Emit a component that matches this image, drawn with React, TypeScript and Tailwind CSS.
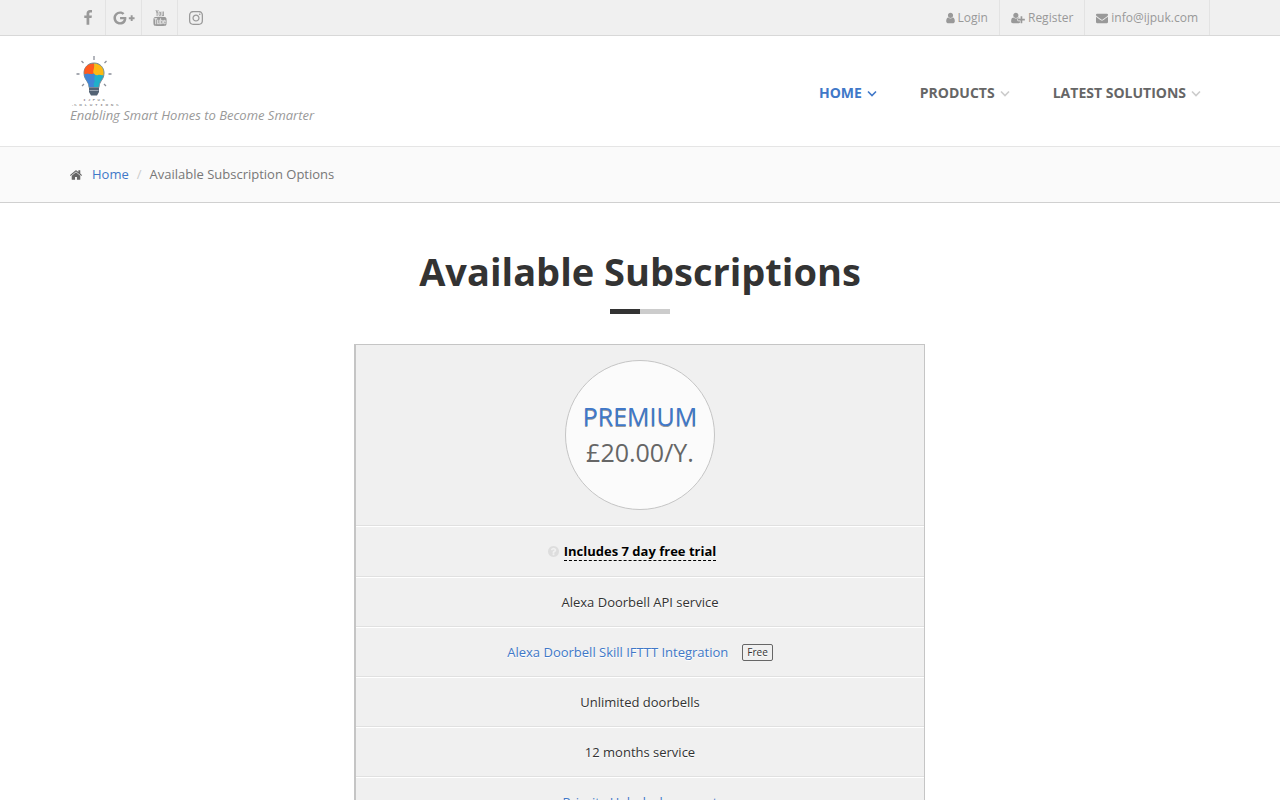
import React from 'react'
import { FaGooglePlusG, FaInstagram } from 'react-icons/fa'

const paths = {
  facebook: "M1343 12v264h-157q-86 0-116 36t-30 108v189h293l-39 296h-254v759h-306v-759h-255v-296h255v-218q0-186 104-288.5t277-102.5q147 0 228 12z",
  youtube: "M1099 1244v211q0 67-39 67-23 0-45-22v-301q22-22 45-22 39 0 39 67zm338 1v46h-90v-46q0-68 45-68t45 68zm-966-218h107v-94h-312v94h105v569h100v-569zm288 569h89v-494h-89v378q-30 42-57 42-18 0-21-21-1-3-1-35v-364h-89v391q0 49 8 73 12 37 58 37 48 0 102-61v54zm429-148v-197q0-73-9-99-17-56-71-56-50 0-93 54v-217h-89v663h89v-48q45 55 93 55 54 0 71-55 9-27 9-100zm338-10v-13h-91q0 51-2 61-7 36-40 36-46 0-46-69v-87h179v-103q0-79-27-116-39-51-106-51-68 0-107 51-28 37-28 116v173q0 79 29 116 39 51 108 51 72 0 108-53 18-27 21-54 2-9 2-58zm-608-913v-210q0-69-43-69t-43 69v210q0 70 43 70t43-70zm719 751q0 234-26 350-14 59-58 99t-102 46q-184 21-555 21t-555-21q-58-6-102.5-46t-57.5-99q-26-112-26-350 0-234 26-350 14-59 58-99t103-47q183-20 554-20t555 20q58 7 102.5 47t57.5 99q26 112 26 350zm-998-1276h102l-121 399v271h-100v-271q-14-74-61-212-37-103-65-187h106l71 263zm370 333v175q0 81-28 118-38 51-106 51-67 0-105-51-28-38-28-118v-175q0-80 28-117 38-51 105-51 68 0 106 51 28 37 28 117zm335-162v499h-91v-55q-53 62-103 62-46 0-59-37-8-24-8-75v-394h91v367q0 33 1 35 3 22 21 22 27 0 57-43v-381h91z",
  user: "M1536 1399q0 109-62.5 187t-150.5 78h-854q-88 0-150.5-78t-62.5-187q0-85 8.5-160.5t31.5-152 58.5-131 94-89 134.5-34.5q131 128 313 128t313-128q76 0 134.5 34.5t94 89 58.5 131 31.5 152 8.5 160.5zm-256-887q0 159-112.5 271.5t-271.5 112.5-271.5-112.5-112.5-271.5 112.5-271.5 271.5-112.5 271.5 112.5 112.5 271.5z",
  userPlus: "M704 896q-159 0-271.5-112.5t-112.5-271.5 112.5-271.5 271.5-112.5 271.5 112.5 112.5 271.5-112.5 271.5-271.5 112.5zm960 128h352q13 0 22.5 9.5t9.5 22.5v192q0 13-9.5 22.5t-22.5 9.5h-352v352q0 13-9.5 22.5t-22.5 9.5h-192q-13 0-22.5-9.5t-9.5-22.5v-352h-352q-13 0-22.5-9.5t-9.5-22.5v-192q0-13 9.5-22.5t22.5-9.5h352v-352q0-13 9.5-22.5t22.5-9.5h192q13 0 22.5 9.5t9.5 22.5v352zm-736 224q0 52 38 90t90 38h256v238q-68 50-171 50h-874q-121 0-194-69t-73-190q0-53 3.5-103.5t14-109 26.5-108.5 43-97.5 62-81 85.5-53.5 111.5-20q19 0 39 17 79 61 154.5 91.5t164.5 30.5 164.5-30.5 154.5-91.5q20-17 39-17 132 0 217 96h-223q-52 0-90 38t-38 90v192z",
  envelope: "M1792 710v794q0 66-47 113t-113 47h-1472q-66 0-113-47t-47-113v-794q44 49 101 87 362 246 497 345 57 42 92.5 65.5t94.5 48 110 24.5h2q51 0 110-24.5t94.5-48 92.5-65.5q170-123 498-345 57-39 100-87zm0-294q0 79-49 151t-122 123q-376 261-468 325-10 7-42.5 31t-54 38.5-52 32.5-57.5 27-50 9h-2q-23 0-50-9t-57.5-27-52-32.5-54-38.5-42.5-31q-91-64-262-182.5t-205-142.5q-62-42-117-115.5t-55-136.5q0-78 41.5-130t118.5-52h1472q65 0 112.5 47t47.5 113z",
  home: "M1472 992v480q0 26-19 45t-45 19h-384v-384h-256v384h-384q-26 0-45-19t-19-45v-480q0-1 .5-3t.5-3l575-474 575 474q1 2 1 6zm223-69l-62 74q-8 9-21 11h-3q-13 0-21-7l-692-577-692 577q-12 8-24 7-13-2-21-11l-62-74q-8-10-7-23.5t11-21.5l719-599q32-26 76-26t76 26l244 204v-195q0-14 9-23t23-9h192q14 0 23 9t9 23v408l219 182q10 8 11 21.5t-7 23.5z",
  question: "M1024 1376v-192q0-14-9-23t-23-9h-192q-14 0-23 9t-9 23v192q0 14 9 23t23 9h192q14 0 23-9t9-23zm256-672q0-88-55.5-163t-138.5-116-170-41q-243 0-371 213-15 24 8 42l132 100q7 6 19 6 16 0 25-12 53-68 86-92 34-24 86-24 48 0 85.5 26t37.5 59q0 38-20 61t-68 45q-63 28-115.5 86.5t-52.5 125.5v36q0 14 9 23t23 9h192q14 0 23-9t9-23q0-19 21.5-49.5t54.5-49.5q32-18 49-28.5t46-35 44.5-48 28-60.5 12.5-81zm384 192q0 209-103 385.5t-279.5 279.5-385.5 103-385.5-103-279.5-279.5-103-385.5 103-385.5 279.5-279.5 385.5-103 385.5 103 279.5 279.5 103 385.5z",
}

const Icon = ({ d, box = "0 0 1792 1792", className }: { d: string; box?: string; className: string }) => (
  <svg viewBox={box} className={className} fill="currentColor" aria-hidden="true">
    <path d={d} />
  </svg>
)

const socials = [
  { label: "Facebook", icon: <Icon d={paths.facebook} className="size-4" /> },
  { label: "Google Plus", icon: <FaGooglePlusG size={22} /> },
  { label: "YouTube", icon: <Icon d={paths.youtube} className="size-4" /> },
  { label: "Instagram", icon: <FaInstagram size={16} /> },
]

const account = [
  { label: "Login", icon: <Icon d={paths.user} box="256 0 1280 1792" className="h-3 w-[9px]" /> },
  { label: "Register", icon: <Icon d={paths.userPlus} box="0 0 2048 1792" className="h-3 w-3.5" /> },
  { label: "info@ijpuk.com", icon: <Icon d={paths.envelope} className="size-3" /> },
]

const menu = [
  { label: "HOME", active: true },
  { label: "PRODUCTS", active: false },
  { label: "LATEST SOLUTIONS", active: false },
]

const Logo = () => (
  <svg viewBox="0 0 50 50" className="size-[50px]" aria-hidden="true">
    <path
      d="M24 0v4M11.500 5l2 2M36.500 5l-2 2M6.500 18h3M38.500 18h3M12 30l2-2M36 30l-2-2"
      stroke="#8b8f99"
      strokeWidth="1.3"
    />
    <path d="M24 7c-6 0-10 4.500-10 10 0 4.500 2 6.500 3.500 9 1 1.800 1.500 3.500 1.500 5.500h10c0-2 .5-3.700 1.500-5.500 1.500-2.500 3.500-4.500 3.500-9 0-5.500-4-10-10-10z" fill="#1fb0c9" stroke="#7d8794" strokeWidth="1" />
    <path d="M24 7.500v10c-3 2-6-1-9.500 1-1.500-6.500 3-11 9.500-11z" fill="#ff5a1f" />
    <path d="M24 7.500c6.500 0 10.500 5 9.500 11.500-2 1-3.500-1-5.500 0s-3-1-4-1c-2-3 1-5 0-10.500z" fill="#fdb913" />
    <path d="M14.500 18.500c3.500-2 6.500 1 9.500-1 2 3-1 5 1 8-2 1-1 3-1 5.500h-4.500c0-4-5-8-5-12.500z" fill="#4285d6" />
    <path d="M19 32h10v4l-2 3.500h-6l-2-3.500z" fill="#536273" />
    <path d="M19.500 34.500h9" stroke="#b8c0c8" strokeWidth=".7" />
    <text x="24" y="45" textAnchor="middle" fontSize="4" fontFamily="Liberation Mono, monospace" fill="#666">I J P  U K</text>
    <text x="25" y="49.500" textAnchor="middle" fontSize="4.400" fontFamily="Liberation Mono, monospace" fill="#666">.S O L U T I O N S</text>
  </svg>
)

const features = [
  {
    key: "trial",
    node: (
      <span className="flex items-center gap-[5px] pr-4">
        <Icon d={paths.question} box="128 128 1536 1536" className="size-[11px] text-[#dddddd]" />
        <span className="border-b border-dashed border-black font-bold text-black">
          Includes 7 day free trial
        </span>
      </span>
    ),
  },
  { key: "api", node: "Alexa Doorbell API service" },
  {
    key: "ifttt",
    node: (
      <>
        <a href="#" className="text-[#4078c8]">Alexa Doorbell Skill IFTTT Integration</a>
        <span className="ml-3.5 rounded-xs border border-[#666] px-1 text-[10px] leading-[15px]">Free</span>
      </>
    ),
  },
  { key: "doorbells", node: "Unlimited doorbells" },
  { key: "months", node: "12 months service" },
  { key: "support", node: <a href="#" className="text-[#4078c8]">Priority Helpdesk support</a> },
]

const App = () => {
  return (
    <div className="min-h-screen bg-white font-['Open_Sans',sans-serif] text-[13px] text-[#666]">

      {/* Top bar */}
      <div className="border-b border-[#d8d8d8] bg-[#f0f0f0] text-[#999]">
        <div className="mx-auto flex h-[35px] max-w-[1140px] justify-between">
          <ul className="flex">
            {socials.map((s) => (
              <li key={s.label} className="w-9 border-r border-[#e3e3e3] last:border-r-0">
                <a href="#" aria-label={s.label} className="flex h-full items-center justify-center">
                  {s.icon}
                </a>
              </li>
            ))}
          </ul>
          <ul className="flex text-xs">
            {account.map((a) => (
              <li key={a.label} className="border-r border-[#e3e3e3]">
                <a href="#" className="flex h-full items-center gap-[3px] px-[11px]">
                  {a.icon}
                  {a.label}
                </a>
              </li>
            ))}
          </ul>
        </div>
      </div>

      {/* Header */}
      <header className="mx-auto flex h-[110px] max-w-[1140px] items-start justify-between pt-5">
        <a href="#" className="flex flex-col text-[#999]">
          <Logo />
          <span className="italic leading-[18px]">Enabling Smart Homes to Become Smarter</span>
        </a>
        <nav className="flex gap-[42px] pt-[27px] pr-2 text-sm font-bold">
          {menu.map((m) => (
            <a
              key={m.label}
              href="#"
              className={`flex items-center gap-1 ${m.active ? "text-[#4078c8]" : "text-[#666]"}`}
            >
              {m.label}
              <svg
                viewBox="0 0 12 12"
                className={`size-3 ${m.active ? "" : "text-[#ccc]"}`}
                fill="none"
                stroke="currentColor"
                strokeWidth="1.6"
                aria-hidden="true"
              >
                <path d="M2 4.500l4 4 4-4" />
              </svg>
            </a>
          ))}
        </nav>
      </header>

      {/* Breadcrumb */}
      <div className="border-t border-b border-t-[#e5e5e5] border-b-[#d0d0d0] bg-[#fafafa]">
        <nav className="mx-auto flex h-[55px] max-w-[1140px] items-center">
          <Icon d={paths.home} box="90 240 1612 1300" className="mr-2.5 h-2.5 w-3" />
          <a href="#" className="text-[#4078c8]">Home</a>
          <span className="px-2 text-[#ccc]">/</span>
          <span className="text-[#777]">Available Subscription Options</span>
        </nav>
      </div>

      {/* Pricing */}
      <main className="mx-auto flex max-w-[1140px] flex-col items-center pt-10">
        <h1 className="text-[38px] font-bold leading-[56px] text-[#333]">Available Subscriptions</h1>
        <div className="mt-2.5 mb-[30px] flex h-[5px] w-[60px] bg-[#ccc]">
          <div className="w-1/2 bg-[#333]" />
        </div>

        <div className="w-1/2">
          <section className="-ml-px border border-l-2 border-[#c5c5c5] bg-[#f0f0f0]">
            <div className="flex h-[181px] items-center justify-center border-b border-[#e0e0e0]">
              <div className="flex size-[150px] flex-col items-center justify-center rounded-full border border-[#c5c5c5] bg-[#fbfbfb] pb-0.5 text-[25px]">
                <h2 className="leading-9 text-[#4078c8] [text-shadow:0_1px_0_#999]">PREMIUM</h2>
                <p className="leading-9">£20.00/Y.</p>
              </div>
            </div>
            <ul className="leading-[18px] text-[#333] [text-shadow:0_1px_0_#fff]">
              {features.map((f) => (
                <li
                  key={f.key}
                  className="flex items-center justify-center border-t border-b border-t-white border-b-[#e0e0e0] py-[15px]"
                >
                  {f.node}
                </li>
              ))}
            </ul>
          </section>
        </div>
      </main>
    </div>
  )
}

export default App
